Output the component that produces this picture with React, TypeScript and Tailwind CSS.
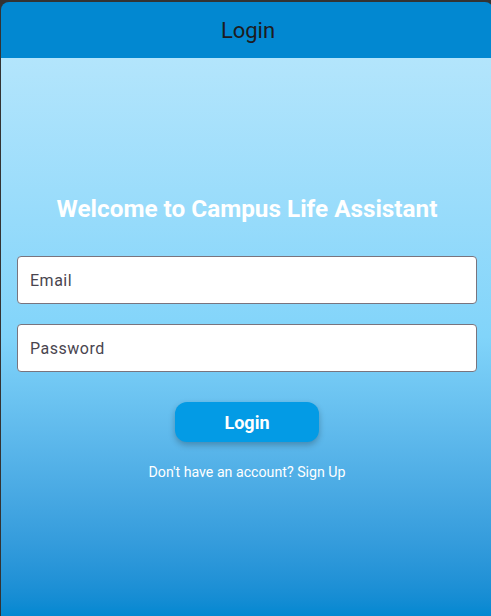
import React from 'react'

function TextField({ label, type = 'text' }: { label: string; type?: string }) {
  return (
    <input
      type={type}
      placeholder={label}
      className="block h-12 w-full rounded-[4px] border border-[#79747e] bg-white px-3 text-[16px] tracking-[0.5px] text-[#1d1b20] outline-none placeholder:text-[#49454f]"
    />
  )
}

export default function App() {
  return (
    <div className="h-[616px] w-[491px] overflow-hidden bg-[#333333] pl-[1px] pt-[2px] font-['Roboto',sans-serif]">
      <div className="flex h-[614px] w-[492px] flex-col overflow-hidden rounded-t-[8px]">
        <header className="flex h-[56px] shrink-0 items-center justify-center bg-[#0288d1]">
          <h1 className="pl-[2px] text-[22px] font-normal text-[#1d1b20]">Login</h1>
        </header>
        <main className="flex flex-1 flex-col items-center justify-center bg-gradient-to-b from-[#b3e5fc] via-[#81d4fa] to-[#0288d1] px-4 pt-[3px]">
          <h2 className="text-[24.3px] font-bold leading-[28px] text-white">
            Welcome to Campus Life Assistant
          </h2>
          <div className="mt-[33px] flex w-full flex-col gap-5">
            <TextField label="Email" />
            <TextField label="Password" type="password" />
          </div>
          <button className="mt-[30px] h-10 w-36 rounded-xl bg-[#039be5] text-[18px] font-bold text-white shadow-[0_3px_6px_rgba(0,0,0,0.25)]">
            Login
          </button>
          <p className="mt-[20px] text-[14.2px] leading-5 text-white">Don't have an account? Sign Up</p>
        </main>
      </div>
    </div>
  )
}
